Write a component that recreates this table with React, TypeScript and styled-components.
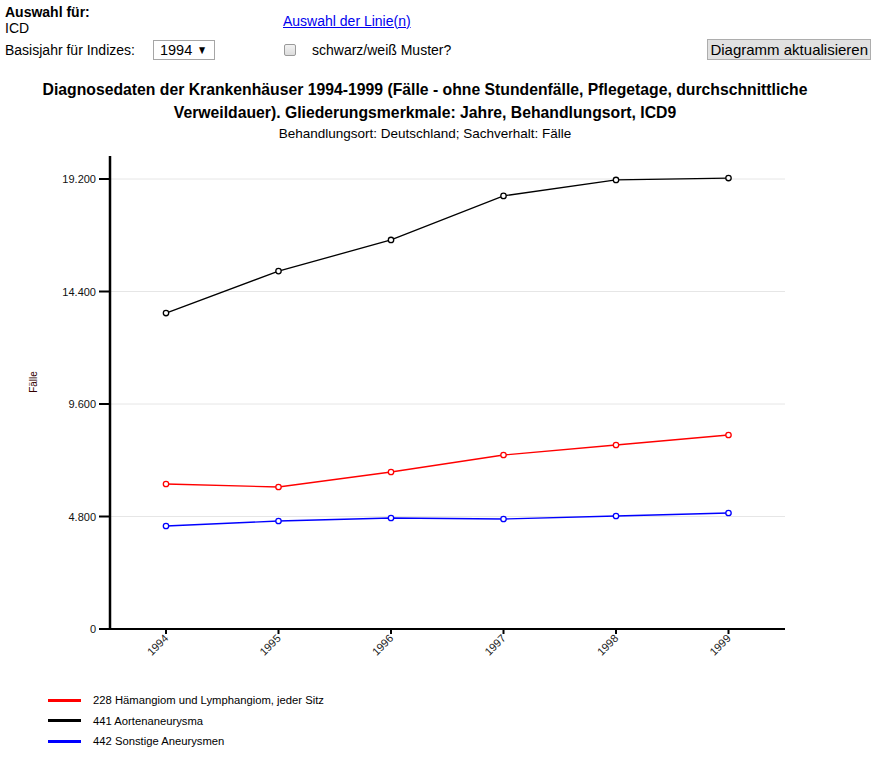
import React from "react";
import styled, { createGlobalStyle } from "styled-components";

const GlobalStyle = createGlobalStyle`
    html, body {
        margin: 0;
        padding: 0;
        background: #fff;
        font-family: "Liberation Sans", Arial, sans-serif;
        color: #000;
    }
`;

type Series = { label: string; color: string; values: number[] };

const years = [1994, 1995, 1996, 1997, 1998, 1999];

const series: Series[] = [
    { label: "228 Hämangiom und Lymphangiom, jeder Sitz", color: "#ff0000", values: [6187, 6059, 6699, 7424, 7851, 8277] },
    { label: "441 Aortenaneurysma", color: "#000000", values: [13480, 15270, 16600, 18480, 19160, 19240] },
    { label: "442 Sonstige Aneurysmen", color: "#0000ff", values: [4395, 4608, 4736, 4693, 4821, 4949] },
];

const ticks = [
    { v: 19200, label: "19.200" },
    { v: 14400, label: "14.400" },
    { v: 9600, label: "9.600" },
    { v: 4800, label: "4.800" },
    { v: 0, label: "0" },
];

// chart geometry in page pixels (the svg viewBox starts at y=150)
const left = 110;
const right = 785;
const bottom = 629;
const top = 156;
const pxPer = 112.5 / 4800;
const xAt = (i: number) => 166 + i * 112.5;
const yAt = (v: number) => bottom - v * pxPer;

const App = () => {
    return (
        <Page>
            <GlobalStyle />
            <Controls>
                <Cell>
                    <Bold>Auswahl für:</Bold>
                    <div>ICD</div>
                </Cell>
                <LinkCell>
                    <a href="#">Auswahl der Linie(n)</a>
                </LinkCell>
                <Cell />
                <Cell>
                    <Inline>
                        <span>Basisjahr für Indizes:</span>
                        <SelectBox>
                            <Select defaultValue="1994">
                                {years.map((y) => (
                                    <option key={y} value={y}>{y}</option>
                                ))}
                            </Select>
                            <Arrow>▼</Arrow>
                        </SelectBox>
                    </Inline>
                </Cell>
                <Cell>
                    <Inline>
                        <Check type="checkbox" />
                        <CheckLabel>schwarz/weiß Muster?</CheckLabel>
                    </Inline>
                </Cell>
                <Cell>
                    <Button>Diagramm aktualisieren</Button>
                </Cell>
            </Controls>

            <Title>
                Diagnosedaten der Krankenhäuser 1994-1999 (Fälle - ohne Stundenfälle, Pflegetage, durchschnittliche
                Verweildauer). Gliederungsmerkmale: Jahre, Behandlungsort, ICD9
            </Title>
            <Subtitle>Behandlungsort: Deutschland; Sachverhalt: Fälle</Subtitle>

            <Chart viewBox="0 150 892 510" width={892} height={510}>
                {ticks.filter((t) => t.v > 0).map((t) => (
                    <line key={t.v} x1={left} x2={right} y1={yAt(t.v)} y2={yAt(t.v)} stroke="#e6e6e6" strokeWidth={1} />
                ))}
                {ticks.map((t) => (
                    <g key={"t" + t.v}>
                        <line x1={99} x2={left} y1={yAt(t.v)} y2={yAt(t.v)} stroke="#000" strokeWidth={2} />
                        <text x={96} y={yAt(t.v) + 4} fontSize={11} textAnchor="end" fill="#111">{t.label}</text>
                    </g>
                ))}
                {years.map((y, i) => (
                    <g key={y}>
                        <line x1={xAt(i)} x2={xAt(i)} y1={bottom} y2={bottom + 5} stroke="#000" strokeWidth={2} />
                        <text
                            x={xAt(i) + 3}
                            y={bottom + 10}
                            fontSize={11}
                            textAnchor="end"
                            fill="#222"
                            transform={`rotate(-45 ${xAt(i) + 3} ${bottom + 10})`}
                        >
                            {y}
                        </text>
                    </g>
                ))}
                <line x1={left} x2={left} y1={top} y2={bottom + 1} stroke="#000" strokeWidth={2.5} />
                <line x1={left - 1} x2={right} y1={bottom} y2={bottom} stroke="#000" strokeWidth={2} />
                <text x={37} y={382} fontSize={10} textAnchor="middle" fill="#300" transform="rotate(-90 37 382)">Fälle</text>

                {series.map((s) => (
                    <g key={s.label}>
                        <polyline
                            points={s.values.map((v, i) => `${xAt(i)},${yAt(v)}`).join(" ")}
                            fill="none"
                            stroke={s.color}
                            strokeWidth={1.3}
                        />
                        {s.values.map((v, i) => (
                            <circle key={i} cx={xAt(i)} cy={yAt(v)} r={2.7} fill="#fff" stroke={s.color} strokeWidth={1.3} />
                        ))}
                    </g>
                ))}
            </Chart>

            <Legend>
                {series.map((s) => (
                    <LegendRow key={s.label}>
                        <Swatch $color={s.color} />
                        <span>{s.label}</span>
                    </LegendRow>
                ))}
            </Legend>
        </Page>
    );
};

const Page = styled.div`
    width: 892px;
    height: 758px;
    overflow: hidden;
`;

const Controls = styled.div`
    display: grid;
    grid-template-columns: 278px 1fr auto;
    grid-template-rows: 35px 23px;
    padding: 3px 21px 0 5px;
    font-size: 14px;
    line-height: 16px;
`;

const Cell = styled.div`
    display: flex;
    flex-direction: column;
    justify-content: flex-start;
`;

const LinkCell = styled.div`
    display: flex;
    align-items: center;
    a {
        color: #0000ee;
        text-decoration: underline;
    }
`;

const Bold = styled.div`
    font-weight: bold;
    padding-top: 1px;
`;

const Inline = styled.div`
    display: flex;
    align-items: center;
    height: 21px;
    margin-top: 1px;
`;

const SelectBox = styled.div`
    position: relative;
    margin-left: 18px;
    width: 62px;
    height: 20px;
`;

const Select = styled.select`
    appearance: none;
    -webkit-appearance: none;
    width: 62px;
    height: 20px;
    border: 1px solid #a6a6a6;
    border-radius: 0;
    background: #fff;
    padding: 0 0 0 6px;
    font-family: "Liberation Sans", Arial, sans-serif;
    font-size: 14.5px;
    color: #000;
`;

const Arrow = styled.span`
    position: absolute;
    right: 7px;
    top: 2px;
    font-size: 12px;
    line-height: 16px;
    transform: scaleX(0.85);
    pointer-events: none;
`;

const Check = styled.input`
    appearance: none;
    -webkit-appearance: none;
    margin: 0 0 0 1px;
    width: 12px;
    height: 12px;
    border: 1px solid #9a9a9a;
    border-radius: 2px;
    background: linear-gradient(#f2f2f2, #dcdcdc);
`;

const CheckLabel = styled.span`
    margin-left: 16px;
`;

const Button = styled.button`
    font-family: "Liberation Sans", Arial, sans-serif;
    font-size: 15px;
    height: 21px;
    padding: 0 2px;
    margin-top: 1px;
    background: #e1e1e1;
    border: 1px solid #adadad;
    border-radius: 0;
    color: #000;
`;

const Title = styled.div`
    width: 850px;
    margin-top: 17px;
    text-align: center;
    font-size: 15.75px;
    font-weight: bold;
    line-height: 23px;
`;

const Subtitle = styled.div`
    width: 850px;
    text-align: center;
    font-size: 13.5px;
    line-height: 20px;
`;

const Chart = styled.svg`
    display: block;
    margin-top: 6px;
    font-family: "Liberation Sans", Arial, sans-serif;
`;

const Legend = styled.div`
    display: flex;
    flex-direction: column;
    margin-top: 30px;
    padding-left: 48px;
    font-size: 11.25px;
`;

const LegendRow = styled.div`
    display: flex;
    align-items: center;
    height: 20.5px;
`;

const Swatch = styled.span<{ $color: string }>`
    display: inline-block;
    width: 33px;
    height: 3px;
    background: ${(p) => p.$color};
    margin-right: 12px;
`;

export default App;
